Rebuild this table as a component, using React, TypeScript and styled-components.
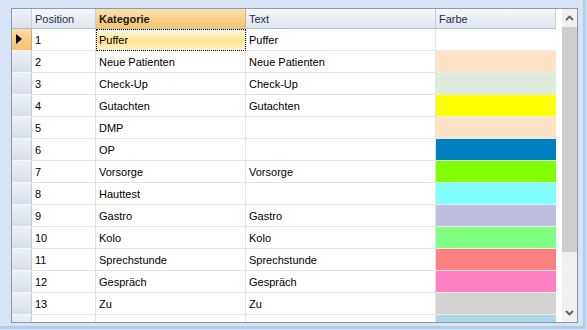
import React from "react";
import styled, { createGlobalStyle, css } from "styled-components";

const Global = createGlobalStyle`
  html, body { margin: 0; padding: 0; }
  body {
    width: 587px; height: 330px; overflow: hidden;
    background: #d6e4f5;
    font-family: "Liberation Sans", Arial, sans-serif;
    font-size: 11px;
  }
`;

const Frame = styled.div`
  box-sizing: border-box;
  width: 586px;
  height: 329px;
  padding: 8px 5px 3px 11px;
  background: #d6e4f5;
  border-right: 3px solid #b4cceb;
  border-bottom: 3px solid #b4cceb;
`;

const Grid = styled.div`
  box-sizing: border-box;
  width: 567px;
  height: 315px;
  border: 1px solid #8e9aab;
  background: #ffffff;
  display: flex;
  overflow: hidden;
`;

const Table = styled.div`
  flex: 1;
  display: grid;
  grid-template-columns: 20px 64px 150px 190px 120px;
  grid-auto-rows: 22px;
  grid-template-rows: 20px;
  align-content: start;
  overflow: hidden;
`;

const HeadCell = styled.div<{ $active?: boolean; $corner?: boolean }>`
  box-sizing: border-box;
  display: flex;
  align-items: center;
  padding-left: 3px;
  color: #1b2d4f;
  background: linear-gradient(#f6f8fb, #dfe6ef);
  border-right: 1px solid #c7d0dc;
  border-bottom: 1px solid #b2bece;
  ${(p) =>
    p.$active &&
    css`
      background: linear-gradient(#fbe2b2, #f5c46e);
      font-weight: bold;
      color: #1a1a1a;
      border-right-color: #dcb070;
    `}
  ${(p) =>
    p.$corner &&
    css`
      background: linear-gradient(#eef1f6, #dbe2ec);
    `}
`;

const RowHead = styled.div<{ $current?: boolean }>`
  box-sizing: border-box;
  position: relative;
  background: linear-gradient(#edf0f5, #d7dee9);
  border-right: 1px solid #c3ccd8;
  border-bottom: 1px solid #f4f6f9;
  ${(p) =>
    p.$current &&
    css`
      background: linear-gradient(#f9dca5, #f3c172);
      border-right-color: #d8ad6c;
    `}
`;

const Marker = styled.span`
  position: absolute;
  left: 4px;
  top: 5px;
  width: 0;
  height: 0;
  border-top: 5px solid transparent;
  border-bottom: 5px solid transparent;
  border-left: 6px solid #000;
`;

const Cell = styled.div<{ $focus?: boolean }>`
  box-sizing: border-box;
  display: flex;
  align-items: center;
  padding-left: 3px;
  white-space: nowrap;
  overflow: hidden;
  color: #000;
  border-right: 1px solid #e4e4e4;
  border-bottom: 1px solid #e4e4e4;
  ${(p) =>
    p.$focus &&
    css`
      padding-left: 2px;
      border: 1px dotted #000;
      background: linear-gradient(#fff8e0 0%, #ffe48f 55%, #fff3c8 100%);
    `}
`;

const Swatch = styled.div`
  box-sizing: border-box;
  border-bottom: 1px solid #ececec;
`;

const Gap = styled.div`
  width: 6px;
  background: #fff;
`;

const ScrollBar = styled.div`
  width: 15px;
  display: flex;
  flex-direction: column;
  background: #f0f0f0;
`;

const Arrow = styled.div`
  height: 18px;
  display: flex;
  align-items: center;
  justify-content: center;
`;

const Thumb = styled.div`
  height: 225px;
  background: #cdcdcd;
`;

const Track = styled.div`
  flex: 1;
`;

type Row = { pos: number; kat: string; text: string; color: string };

const rows: Row[] = [
  { pos: 1, kat: "Puffer", text: "Puffer", color: "#ffffff" },
  { pos: 2, kat: "Neue Patienten", text: "Neue Patienten", color: "#fde3c5" },
  { pos: 3, kat: "Check-Up", text: "Check-Up", color: "#dfebdf" },
  { pos: 4, kat: "Gutachten", text: "Gutachten", color: "#ffff00" },
  { pos: 5, kat: "DMP", text: "", color: "#fde3c5" },
  { pos: 6, kat: "OP", text: "", color: "#0080c0" },
  { pos: 7, kat: "Vorsorge", text: "Vorsorge", color: "#80ff00" },
  { pos: 8, kat: "Hauttest", text: "", color: "#80ffff" },
  { pos: 9, kat: "Gastro", text: "Gastro", color: "#bebee0" },
  { pos: 10, kat: "Kolo", text: "Kolo", color: "#80ff80" },
  { pos: 11, kat: "Sprechstunde", text: "Sprechstunde", color: "#ff8080" },
  { pos: 12, kat: "Gespräch", text: "Gespräch", color: "#ff80c0" },
  { pos: 13, kat: "Zu", text: "Zu", color: "#d3d3d3" },
  { pos: 14, kat: "Pufferfrei", text: "Pufferfrei", color: "#add8e6" },
];

const Chevron = ({ up }: { up?: boolean }) => (
  <svg width="9" height="6" viewBox="0 0 9 6">
    <path
      d={up ? "M1 5 L4.5 1.5 L8 5" : "M1 1 L4.5 4.5 L8 1"}
      fill="none"
      stroke="#606060"
      strokeWidth="1.8"
    />
  </svg>
);

export default function App() {
  return (
    <>
      <Global />
      <Frame>
        <Grid>
          <Table>
            <HeadCell $corner />
            <HeadCell>Position</HeadCell>
            <HeadCell $active>Kategorie</HeadCell>
            <HeadCell>Text</HeadCell>
            <HeadCell>Farbe</HeadCell>
            {rows.map((r, i) => (
              <React.Fragment key={r.pos}>
                <RowHead $current={i === 0}>{i === 0 && <Marker />}</RowHead>
                <Cell>{r.pos}</Cell>
                <Cell $focus={i === 0}>{r.kat}</Cell>
                <Cell>{r.text}</Cell>
                <Swatch style={{ background: r.color }} />
              </React.Fragment>
            ))}
          </Table>
          <Gap />
          <ScrollBar>
            <Arrow>
              <Chevron up />
            </Arrow>
            <Thumb />
            <Track />
            <Arrow>
              <Chevron />
            </Arrow>
          </ScrollBar>
        </Grid>
      </Frame>
    </>
  );
}
